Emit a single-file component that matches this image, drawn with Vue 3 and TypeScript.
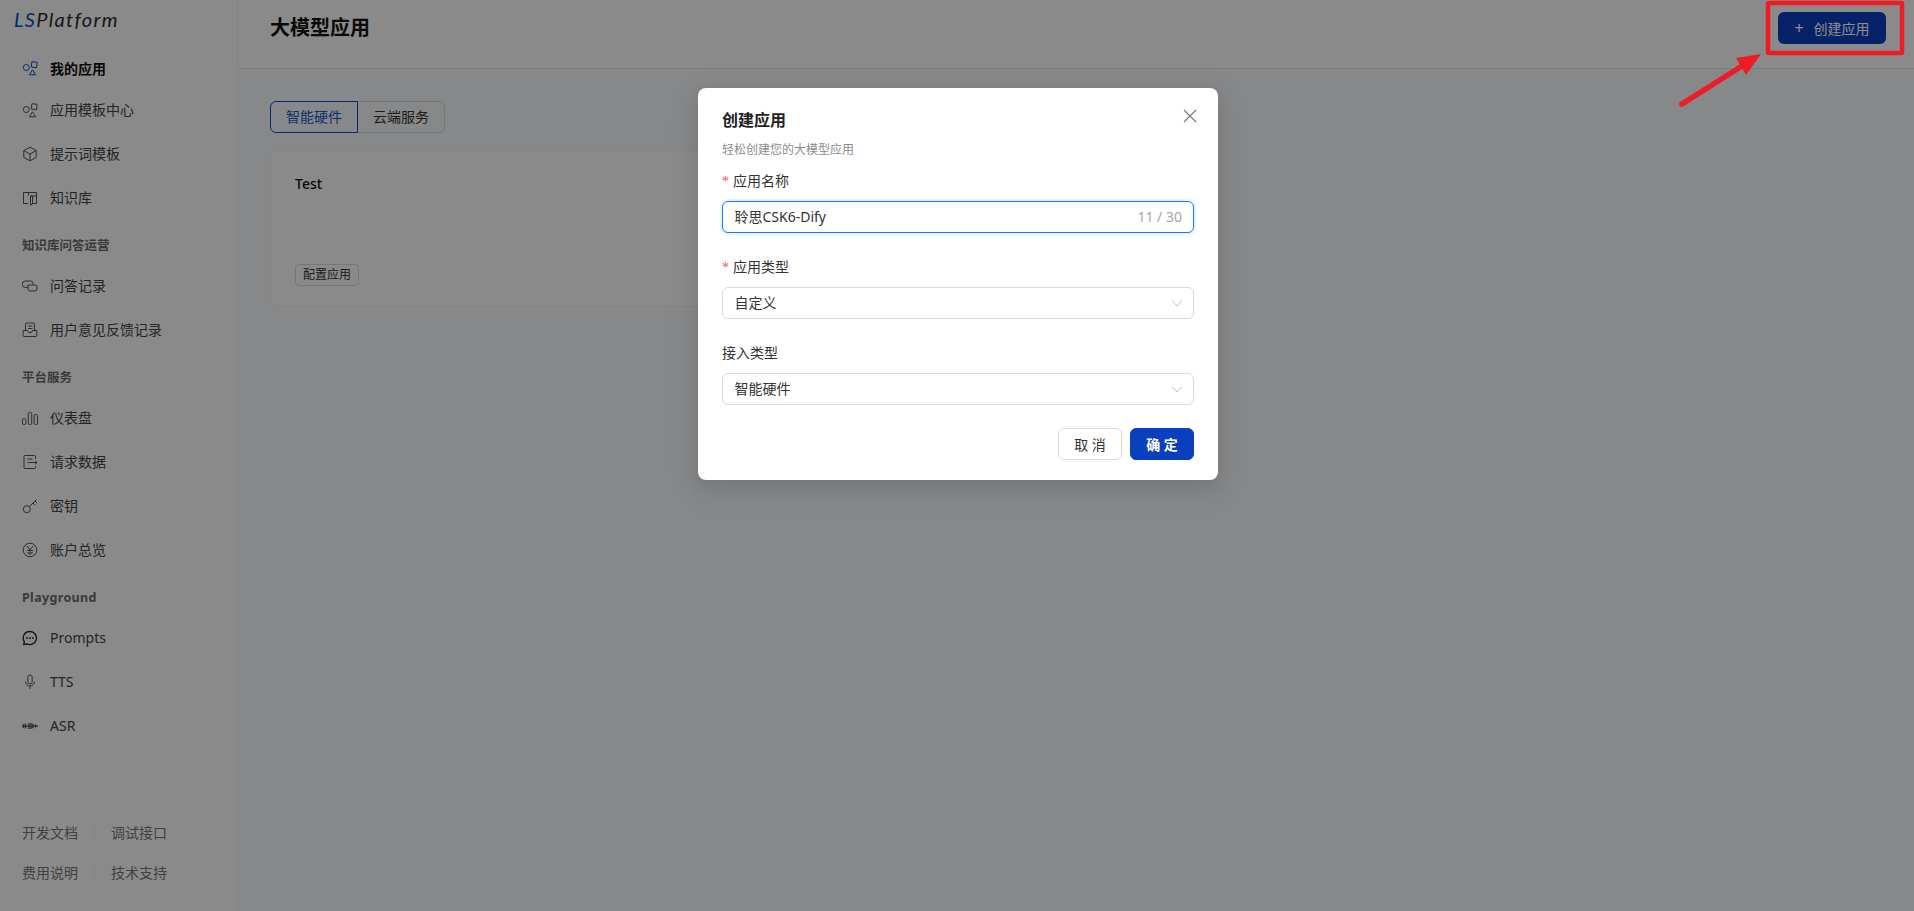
<script setup lang="ts">
interface NavItem { label: string; icon: string; active?: boolean }
interface NavGroup { title?: string; items: NavItem[] }

const groups: NavGroup[] = [
  { items: [
    { label: '我的应用', icon: 'shapes', active: true },
    { label: '应用模板中心', icon: 'shapes' },
    { label: '提示词模板', icon: 'cube' },
    { label: '知识库', icon: 'book' },
  ] },
  { title: '知识库问答运营', items: [
    { label: '问答记录', icon: 'chat' },
    { label: '用户意见反馈记录', icon: 'inbox' },
  ] },
  { title: '平台服务', items: [
    { label: '仪表盘', icon: 'bars' },
    { label: '请求数据', icon: 'export' },
    { label: '密钥', icon: 'key' },
    { label: '账户总览', icon: 'yen' },
  ] },
  { title: 'Playground', items: [
    { label: 'Prompts', icon: 'bubble' },
    { label: 'TTS', icon: 'mic' },
    { label: 'ASR', icon: 'wave' },
  ] },
]
</script>

<template>
  <div class="page">
    <aside class="sidebar">
      <div class="logo"><span class="logo-ls">LS</span>Platform</div>
      <nav class="nav">
        <section v-for="(g, i) in groups" :key="i" class="group">
          <h4 v-if="g.title" class="group-title" :class="{ en: g.title === 'Playground' }">{{ g.title }}</h4>
          <a v-for="item in g.items" :key="item.label" class="nav-item" :class="{ active: item.active }">
            <svg class="nav-icon" :class="'i-' + item.icon" viewBox="0 0 16 16" fill="none" stroke="currentColor" stroke-width="1">
              <template v-if="item.icon === 'shapes'">
                <circle cx="4.300" cy="7.500" r="3" />
                <rect x="9.500" y="2" width="5.400" height="5.400" rx=".6" transform="rotate(8 12 4.700)" />
                <path d="M10.500 9.800l3 5h-6z" stroke-linejoin="round" />
              </template>
              <template v-else-if="item.icon === 'cube'">
                <path d="M8 1.200l6.200 3.400v6.800L8 14.800l-6.200-3.400V4.600z" stroke-linejoin="round" />
                <path d="M1.800 4.600L8 8l6.200-3.400M8 8v6.800" />
              </template>
              <template v-else-if="item.icon === 'book'">
                <path d="M6 13.500H1.500v-11h13v11H11" />
                <path d="M6.500 2.500v3M8.500 6v9l2-1V6zM8.500 6h6" />
              </template>
              <template v-else-if="item.icon === 'chat'">
                <path d="M6 9.500H3.500a2.500 2.500 0 0 1 0-6.500h5a2.500 2.500 0 0 1 2.500 2.500V7" />
                <path d="M6 7h7a2 2 0 0 1 2 2v2a2 2 0 0 1-2 2H8a2 2 0 0 1-2-2z" />
              </template>
              <template v-else-if="item.icon === 'inbox'">
                <path d="M3.500 8.500V2a1 1 0 0 1 1-1h7a1 1 0 0 1 1 1v6.500" />
                <path d="M1.200 8.500h4.300l1 2h3l1-2h4.300v5a1 1 0 0 1-1 1H2.200a1 1 0 0 1-1-1z" />
                <path d="M6 4h4.500M6 6.500h4.500" />
              </template>
              <template v-else-if="item.icon === 'bars'">
                <rect x=".5" y="8.500" width="3.400" height="6" rx="1.200" />
                <rect x="6.300" y="2.500" width="3.400" height="12" rx="1.200" />
                <rect x="12.100" y="4.500" width="3.400" height="10" rx="1.200" />
              </template>
              <template v-else-if="item.icon === 'export'">
                <path d="M13.500 5V2.500a1 1 0 0 0-1-1H3a1 1 0 0 0-1 1v11a1 1 0 0 0 1 1h9.500a1 1 0 0 0 1-1V12" />
                <path d="M5.500 5h5M5.500 8.500h9.500M13 6.800l2 1.700-2 1.700" />
              </template>
              <template v-else-if="item.icon === 'key'">
                <circle cx="4.800" cy="11.200" r="3.500" />
                <path d="M7.300 8.700L14.500 1.500M11 5l2.200 2.200M13 3l2 2" />
              </template>
              <template v-else-if="item.icon === 'yen'">
                <circle cx="8" cy="8" r="6.800" />
                <path d="M5 4l3 4 3-4M5 8.500h6M5 11h6M8 8v5" />
              </template>
              <template v-else-if="item.icon === 'bubble'">
                <path d="M8 1.500a6.500 6.500 0 1 1-3 12.300l-3.300.8.600-3A6.500 6.500 0 0 1 8 1.500z" stroke-width="1.300" stroke-linejoin="round" />
                <circle cx="5" cy="8" r=".9" fill="currentColor" stroke="none" />
                <circle cx="8" cy="8" r=".9" fill="currentColor" stroke="none" />
                <circle cx="11" cy="8" r=".9" fill="currentColor" stroke="none" />
              </template>
              <template v-else-if="item.icon === 'mic'">
                <rect x="5.800" y="1" width="4.400" height="9" rx="2.200" />
                <path d="M3.500 7.500a4.500 4.500 0 0 0 9 0M8 12v3" />
              </template>
              <template v-else>
                <path d="M0 8h16" stroke-width="1.300" />
                <path d="M1.500 6v4M3.500 5.500v5M7 5v6M9 5v6M10.800 5.800v4.400M13.500 6.500v3" stroke-width="1.400" />
              </template>
            </svg>
            <span class="nav-text">{{ item.label }}</span>
          </a>
        </section>
      </nav>
      <footer class="side-foot">
        <div class="foot-row"><a>开发文档</a><i class="foot-sep"></i><a>调试接口</a></div>
        <div class="foot-row"><a>费用说明</a><i class="foot-sep"></i><a>技术支持</a></div>
      </footer>
    </aside>

    <main class="main">
      <header class="top">
        <h1 class="page-title">大模型应用</h1>
        <button class="create-btn" type="button"><span class="plus">+</span>创建应用</button>
      </header>
      <div class="content">
        <div class="tabs">
          <span class="tab on">智能硬件</span>
          <span class="tab">云端服务</span>
        </div>
        <article class="card">
          <h3 class="card-name">Test</h3>
          <span class="tag">配置应用</span>
        </article>
      </div>
    </main>

    <div class="mask">
      <div class="modal">
        <svg class="close" viewBox="0 0 14 14" fill="none" stroke="currentColor" stroke-width="1.100"><path d="M1 1l12 12M13 1L1 13" /></svg>
        <h2 class="modal-title">创建应用</h2>
        <p class="modal-sub">轻松创建您的大模型应用</p>

        <div class="field">
          <label class="label"><em>*</em>应用名称</label>
          <div class="control focus"><span class="value">聆思CSK6-Dify</span><span class="count">11 / 30</span></div>
        </div>
        <div class="field">
          <label class="label"><em>*</em>应用类型</label>
          <div class="control"><span class="value">自定义</span>
            <svg class="chev" viewBox="0 0 12 12" fill="none" stroke="currentColor"><path d="M1 3.500l5 5.500 5-5.500" /></svg>
          </div>
        </div>
        <div class="field">
          <label class="label">接入类型</label>
          <div class="control"><span class="value">智能硬件</span>
            <svg class="chev" viewBox="0 0 12 12" fill="none" stroke="currentColor"><path d="M1 3.500l5 5.500 5-5.500" /></svg>
          </div>
        </div>

        <div class="actions">
          <button class="btn" type="button">取 消</button>
          <button class="btn primary" type="button">确 定</button>
        </div>
      </div>
    </div>

    <svg class="annot" viewBox="0 0 1914 911" fill="none">
      <rect x="1768" y="3" width="134" height="50" rx="1" stroke="#ee1c25" stroke-width="4.500" />
      <path d="M1682 104L1742 66" stroke="#ee1c25" stroke-width="5.500" stroke-linecap="round" />
      <path d="M1761 54L1736 58L1746 75z" fill="#ee1c25" />
    </svg>
  </div>
</template>

<style>
html, body { margin: 0; height: 100%; overflow: hidden; }
#app { height: 100%; }
</style>

<style scoped>
* { box-sizing: border-box; }
.page {
  display: flex;
  height: 911px;
  background: #f5f7fa;
  color: rgba(0, 0, 0, 0.88);
  font-family: "Noto Sans", "Noto Sans CJK SC", sans-serif;
  font-size: 14px;
  position: relative;
  overflow: hidden;
}
.sidebar {
  width: 238px;
  flex: none;
  background: #fbfbfb;
  display: flex;
  flex-direction: column;
  padding-bottom: 19px;
  border-right: 1px solid #f2f2f2;
}
.logo {
  height: 36px;
  padding: 6px 0 0 14px;
  font: italic 400 20px/26px Lato, sans-serif;
  letter-spacing: 1.300px;
  color: #2b2b2b;
}
.logo-ls { color: #0a4fb5; }
.nav { flex: 1; padding-top: 12px; }
.group + .group { margin-top: 8px; }
.group-title {
  margin: 0;
  padding: 0 0 0 22px;
  height: 36px;
  line-height: 36px;
  font-size: 12.500px;
  font-weight: 700;
  color: #6b6b6b;
}
.group-title.en { letter-spacing: .35px; }
.nav-item {
  display: flex;
  align-items: center;
  height: 44px;
  padding-left: 22px;
  color: #444;
}
.nav-text { margin-bottom: 2px; }
.nav-icon { width: 16px; height: 16px; margin-right: 12px; flex: none; color: #555; }
.nav-icon.i-bubble { color: #222; }
.nav-item.active { height: 40px; font-weight: 700; color: #111; }
.nav-item.active .nav-text { margin-bottom: 0; }
.nav-item.active .nav-icon { color: #0a4fb5; }
.side-foot { padding-left: 22px; color: #777; font-size: 14px; }
.foot-row { display: flex; align-items: center; height: 40px; }
.foot-row a { width: 56px; }
.foot-sep { width: 1px; height: 14px; background: #eee; margin: 0 16px; }
.main { flex: 1; min-width: 0; display: flex; flex-direction: column; }
.top {
  height: 69px;
  flex: none;
  background: #fbfbfb;
  border-bottom: 1px solid #e8e8e8;
  display: flex;
  justify-content: space-between;
  align-items: flex-start;
  padding: 12px 28px 0 32px;
}
.page-title { margin: 0; font-size: 20px; font-weight: 700; line-height: 32px; color: #111; }
.create-btn {
  width: 108px;
  height: 32px;
  border: none;
  border-radius: 6px;
  background: #0a3fbd;
  color: #fff;
  font: inherit;
  display: flex;
  align-items: center;
  justify-content: center;
}
.plus { margin-right: 10px; font-size: 16px; line-height: 1; }
.content { padding: 32px; flex: 1; }
.tabs { display: flex; height: 32px; }
.tab {
  width: 87px;
  line-height: 30px;
  text-align: center;
  border: 1px solid #d9d9d9;
  border-left: none;
  border-radius: 0 6px 6px 0;
  color: #333;
}
.tab.on {
  width: 88px;
  border: 1px solid #0a4fc5;
  border-radius: 6px 0 0 6px;
  color: #1457cc;
}
.card {
  margin-top: 17px;
  width: 800px;
  height: 157px;
  background: #fbfbfb;
  border: 1px solid #f0f0f0;
  border-radius: 8px;
  padding: 22px 24px 20px;
  display: flex;
  flex-direction: column;
  align-items: flex-start;
}
.card-name { margin: 0; font-size: 14px; font-weight: 500; line-height: 22px; color: #111; }
.tag {
  margin-top: auto;
  font-size: 12px;
  line-height: 20px;
  padding: 0 7px;
  border: 1px solid #d9d9d9;
  border-radius: 4px;
  color: #333;
}
.mask {
  position: absolute;
  inset: 0;
  background: rgba(0, 0, 0, 0.45);
}
.modal {
  position: absolute;
  left: 698px;
  top: 88px;
  width: 520px;
  height: 392px;
  background: #fff;
  border-radius: 8px;
  padding: 20px 24px;
  box-shadow: 0 6px 16px rgba(0, 0, 0, 0.08), 0 9px 28px 8px rgba(0, 0, 0, 0.05);
}
.close { position: absolute; top: 21px; right: 21px; width: 14px; height: 14px; color: #777; }
.modal-title { margin: 0; font-size: 16px; font-weight: 600; line-height: 24px; color: #1f1f1f; }
.modal-sub { margin: 8px 0 10px; font-size: 12px; line-height: 20px; color: #8c8c8c; }
.field { height: 86px; }
.label { display: block; height: 31px; line-height: 22px; color: #333; }
.label em { color: #ff4d4f; font-style: normal; margin-right: 4px; font-family: SimSun, "Liberation Serif", serif; }
.control {
  height: 32px;
  border: 1px solid #d9d9d9;
  border-radius: 6px;
  padding: 0 10px 0 11.500px;
  display: flex;
  align-items: center;
  justify-content: space-between;
  color: #333;
}
.value { margin-bottom: 2px; }
.control.focus { border-color: #1677ff; box-shadow: 0 0 0 2px rgba(5, 145, 255, 0.1); }
.count { color: #a6a6a6; margin-right: 1px; margin-bottom: 2px; }
.chev { width: 12px; height: 12px; color: #bfbfbf; }
.actions { display: flex; justify-content: flex-end; gap: 8px; }
.btn {
  width: 64px;
  height: 32px;
  border: 1px solid #d9d9d9;
  border-radius: 6px;
  background: #fff;
  color: #333;
  font: inherit;
  padding: 0;
}
.btn.primary { background: #0a3fbd; border-color: #0a3fbd; color: #fff; font-weight: 600; }
.annot { position: absolute; inset: 0; width: 1914px; height: 911px; pointer-events: none; }
</style>
